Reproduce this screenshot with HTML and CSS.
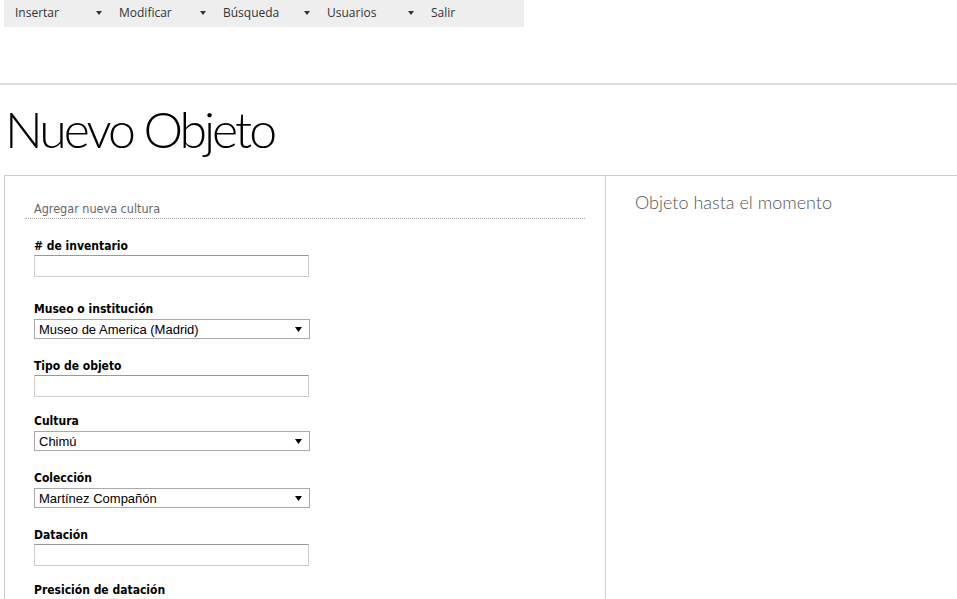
FILE: index.html
```html
<!DOCTYPE html>
<html lang="es">
<head>
<meta charset="utf-8">
<title>Nuevo Objeto</title>
<link rel="stylesheet" href="styles.css">
</head>
<body>
<nav class="menu">
  <div class="menu-item"><span>Insertar</span><span class="caret"></span></div>
  <div class="menu-item"><span>Modificar</span><span class="caret"></span></div>
  <div class="menu-item"><span>Búsqueda</span><span class="caret"></span></div>
  <div class="menu-item"><span>Usuarios</span><span class="caret"></span></div>
  <div class="menu-item"><span>Salir</span></div>
</nav>
<div class="rule"></div>
<h1 class="title">Nuevo Objeto</h1>
<div class="panel">
  <div class="col-left">
    <div class="section-title">Agregar nueva cultura</div>
    <form class="form">
      <div class="field first">
        <label class="label">#&nbsp;de inventario</label>
        <input class="text" type="text">
      </div>
      <div class="field">
        <label class="label">Museo o institución</label>
        <div class="select-wrap">
          <select class="select"><option>Museo de America (Madrid)</option></select>
          <svg class="arrow" width="7" height="5" viewBox="0 0 7 5"><path d="M0 0H7L3.5 5Z" fill="#000"/></svg>
        </div>
      </div>
      <div class="field">
        <label class="label">Tipo de objeto</label>
        <input class="text" type="text">
      </div>
      <div class="field">
        <label class="label">Cultura</label>
        <div class="select-wrap">
          <select class="select"><option>Chimú</option></select>
          <svg class="arrow" width="7" height="5" viewBox="0 0 7 5"><path d="M0 0H7L3.5 5Z" fill="#000"/></svg>
        </div>
      </div>
      <div class="field">
        <label class="label">Colección</label>
        <div class="select-wrap">
          <select class="select"><option>Martínez Compañón</option></select>
          <svg class="arrow" width="7" height="5" viewBox="0 0 7 5"><path d="M0 0H7L3.5 5Z" fill="#000"/></svg>
        </div>
      </div>
      <div class="field">
        <label class="label">Datación</label>
        <input class="text" type="text">
      </div>
      <div class="field">
        <label class="label">Presición de datación</label>
        <input class="text" type="text">
      </div>
    </form>
  </div>
  <div class="col-right">
    <div class="side-title">Objeto hasta el momento</div>
  </div>
</div>
</body>
</html>
```
FILE: styles.css
```css
html, body {
  margin: 0;
  padding: 0;
  background: #fff;
  overflow: hidden;
}
body {
  padding: 0 0 0 4px;
  font-family: "DejaVu Sans Condensed", "DejaVu Sans", sans-serif;
}
.menu {
  display: flex;
  width: 520px;
  height: 27px;
  background: #eeeeee;
}
.menu-item {
  position: relative;
  width: 104px;
  padding-left: 11px;
  box-sizing: border-box;
  font-family: "Open Sans", sans-serif;
  font-size: 12px;
  line-height: 25px;
  color: #333;
}
.caret {
  position: absolute;
  left: 92px;
  top: 11px;
  width: 0;
  height: 0;
  border-left: 3.5px solid transparent;
  border-right: 3.5px solid transparent;
  border-top: 4px solid #333;
}
.rule {
  margin: 56px 0 0 -4px;
  height: 2px;
  background: #dcdcdc;
}
.title {
  margin: 0;
  padding: 14px 0 0 1px;
  height: 76px;
  font-family: "Lato", sans-serif;
  font-weight: 300;
  font-size: 50px;
  line-height: 60px;
  color: #000;
  letter-spacing: -3px;
}
.panel {
  display: flex;
  border: 1px solid #cccccc;
  border-right: none;
  min-height: 500px;
}
.col-left {
  width: 560px;
  padding: 25px 20px 0;
  border-right: 1px solid #cccccc;
}
.col-right {
  flex: 1;
  padding: 15px 0 0 29px;
}
.section-title {
  padding: 0 0 2px 9px;
  border-bottom: 1px dotted #aaaaaa;
  font-size: 12.5px;
  line-height: 15px;
  color: #666;
}
.form {
  padding: 18px 0 0 9px;
}
.field {
  display: flow-root;
  margin-bottom: 15px;
}
.field.first {
  margin-bottom: 23px;
}
.label {
  display: block;
  font-weight: bold;
  font-size: 12px;
  line-height: 18px;
  color: #000;
}
.text {
  display: block;
  margin: 0;
  width: 275px;
  height: 22px;
  box-sizing: border-box;
  border: 1px solid #cccccc;
  border-top-color: #999999;
  background: #fff;
  padding: 0 4px;
}
.select-wrap {
  position: relative;
  width: 276px;
  margin: 1px 0 3px;
}
.select {
  display: block;
  -webkit-appearance: none;
  appearance: none;
  width: 276px;
  height: 20px;
  margin: 0;
  box-sizing: border-box;
  border: 1px solid #a9a9a9;
  border-radius: 0;
  background: #fff;
  padding: 0 0 0 4px;
  font-family: "Liberation Sans", Arial, sans-serif;
  font-size: 13px;
  color: #000;
}
.arrow {
  position: absolute;
  right: 8px;
  top: 8px;
}
.side-title {
  font-family: "Lato", sans-serif;
  font-weight: 300;
  font-size: 18px;
  line-height: 22px;
  color: #555;
}
```
